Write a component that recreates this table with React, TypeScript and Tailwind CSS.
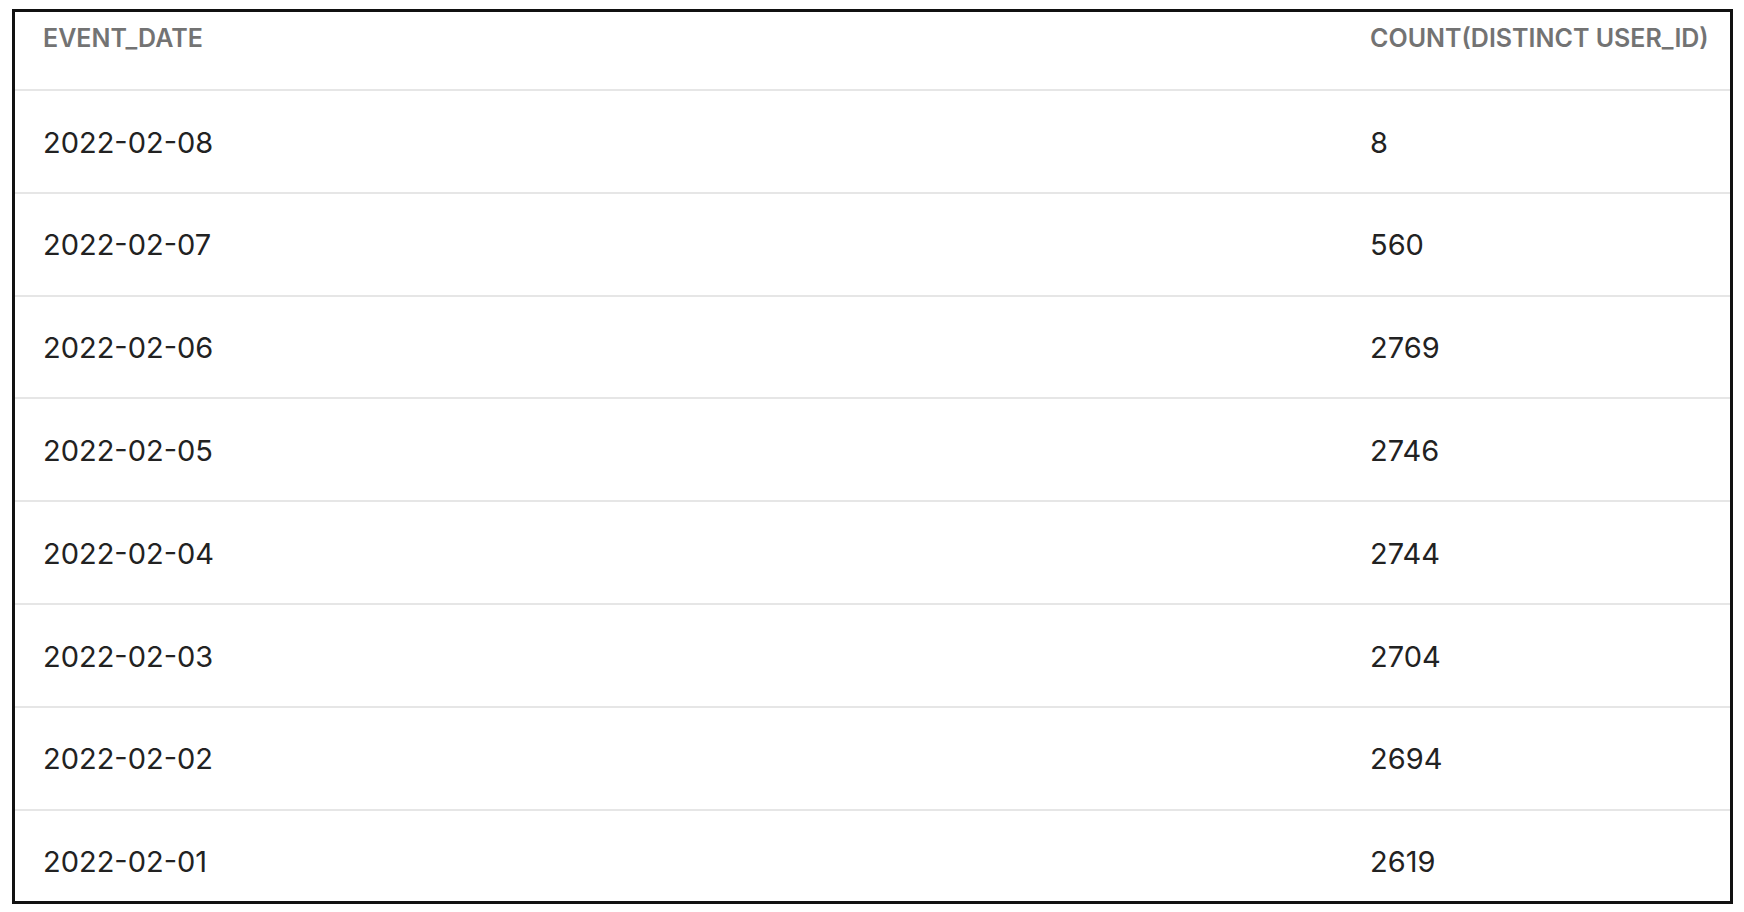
const ROWS = [
  ['2022-02-08', '8'],
  ['2022-02-07', '560'],
  ['2022-02-06', '2769'],
  ['2022-02-05', '2746'],
  ['2022-02-04', '2744'],
  ['2022-02-03', '2704'],
  ['2022-02-02', '2694'],
  ['2022-02-01', '2619'],
];

export default function App() {
  return (
    <div className="w-[1744px] h-[912px] bg-white pl-[12px] pt-[9px] font-['Inter','Liberation_Sans',sans-serif]">
      <div className="w-[1721px] h-[895px] border-[3px] border-[#111] overflow-hidden">
        {/* header */}
        <div className="grid grid-cols-[1327px_1fr] h-[79px] border-b-2 border-[#e6e6e6] text-[25px] leading-none font-semibold text-[#737373] pt-[14px]">
          <div className="pl-[28px]">EVENT_DATE</div>
          <div className="pl-[28px]">COUNT(DISTINCT USER_ID)</div>
        </div>

        {/* rows */}
        {ROWS.map(([date, count]) => (
          <div key={date} className="grid grid-cols-[1327px_1fr] items-center h-[102.8px] border-b-2 border-[#e6e6e6] text-[29px] text-[#222] pt-[2px]">
            <div className="pl-[28px]">{date}</div>
            <div className="pl-[28px]">{count}</div>
          </div>
        ))}
      </div>
    </div>
  );
}
